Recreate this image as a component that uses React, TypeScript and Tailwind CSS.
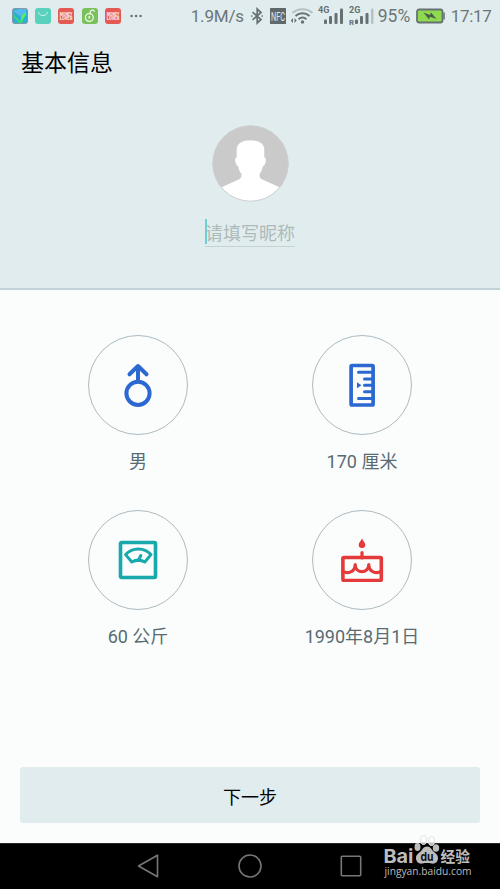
import React from "react";

const StatusBar = () => (
  <div className="flex h-[31px] items-center pl-3 font-[Roboto,sans-serif] text-[#6b7678]">
    {/* Notifications */}
    <div className="flex items-center gap-[7.2px]">
      <svg className="size-4" viewBox="0 0 16 16">
        <rect width="16" height="16" rx="3" fill="#7d9aa5" />
        <rect x="1" y="1" width="14" height="14" rx="2.5" fill="#2eaed3" />
        <path d="M1 3 8 1h6v4l-6 3Z" fill="#55b8ef" />
        <path d="M2 7l6 6 5-8 1 1-4 9H7L2 9Z" fill="#37dc77" />
        <path d="M9 8l5-4v3l-5 6Z" fill="#55ef64" />
      </svg>
      <svg className="size-4" viewBox="0 0 16 16">
        <rect width="16" height="16" rx="3" fill="#59d2bd" />
        <path
          d="M3.500 4.500c1.300 4.200 7.700 4.200 9 0"
          fill="none"
          stroke="#d5f7ef"
          strokeWidth="1"
          strokeLinecap="round"
        />
      </svg>
      <LoverBadge />
      <svg className="size-4" viewBox="0 0 16 16">
        <rect width="16" height="16" rx="3" fill="#79c15a" />
        <g fill="none" stroke="#f0faeb" strokeLinecap="round">
          <circle cx="7.300" cy="9.500" r="3.900" strokeWidth="1.300" />
          <path d="M7.300 9.800V8.500" strokeWidth="1.700" />
          <path d="M8.200 5.600c-.7-3.500 3-4.500 4.200-2.400" strokeWidth="1.200" />
        </g>
      </svg>
      <LoverBadge />
    </div>
    <svg className="ml-[9px] h-1 w-3" viewBox="0 0 12 4" fill="#687476">
      <circle cx="1.600" cy="2" r="1.300" />
      <circle cx="6.100" cy="2" r="1.300" />
      <circle cx="10.600" cy="2" r="1.300" />
    </svg>

    {/* Network */}
    <span className="ml-[49px] w-[60px] pt-0.5 text-[17px] leading-none tracking-[-0.2px] whitespace-nowrap">
      1.9M/s
    </span>
    <svg
      className="h-[18px] w-3"
      viewBox="0 0 12 18"
      fill="none"
      stroke="#667174"
      strokeWidth="1.700"
    >
      <path d="M1.500 5.200 10 12.500 6.200 16V2L10 5.500 1.500 12.800" />
      <path d="M.7 9h.1M11.200 9h.1" strokeLinecap="round" />
    </svg>
    <svg className="ml-[7px] h-4 w-4 overflow-visible" viewBox="0 0 16 16">
      <rect width="16" height="16" rx="0.500" fill="#5f696c" />
      <text
        x="1"
        y="12.700"
        fontSize="13"
        textLength="14"
        lengthAdjust="spacingAndGlyphs"
        fill="#dfe9ea"
        fontFamily="Roboto, sans-serif"
      >
        NFC
      </text>
    </svg>
    <svg className="ml-1 h-[18px] w-6" viewBox="0 0 24 18" fill="none">
      <path d="M2.500 6c5.500-5 14.500-5 20 0" stroke="#b7c1c3" strokeWidth="2" />
      <path d="M5.500 8.900c4-3.500 10-3.500 14 0" stroke="#667174" strokeWidth="2" />
      <path d="M8.600 12.200c2.300-2 5.500-2 7.800 0" stroke="#667174" strokeWidth="2" />
      <circle cx="12.500" cy="15" r="1.700" fill="#667174" />
      <path d="M.8 13.500 3 11v5ZM6.700 13.500 4.500 11v5Z" fill="#667174" />
    </svg>
    <svg className="ml-1 h-[22px] w-[26px] overflow-visible" viewBox="0 0 26 22" fill="#667174">
      <text x="0" y="7.500" fontSize="9" fontWeight="700" fontFamily="Roboto, sans-serif">
        4G
      </text>
      <rect x="6" y="14.500" width="3" height="4.500" rx="1" />
      <rect x="11" y="11" width="3" height="8" rx="1" />
      <rect x="16.500" y="8" width="3" height="11" rx="1" />
      <rect x="22" y="3.500" width="3" height="15.500" rx="1" />
    </svg>
    <svg className="ml-[5px] h-[22px] w-[26px] overflow-visible" viewBox="0 0 26 22" fill="#667174">
      <text x="0" y="7.500" fontSize="9" fontWeight="700" fontFamily="Roboto, sans-serif">
        2G
      </text>
      <text x="0" y="20" fontSize="8" fontWeight="700" fontFamily="Roboto, sans-serif">
        R
      </text>
      <rect x="6" y="14.500" width="3" height="4.500" rx="1" />
      <rect x="11" y="11" width="3" height="8" rx="1" />
      <rect x="16.500" y="8" width="3" height="11" rx="1" />
      <rect x="22" y="3.500" width="2.500" height="15.500" rx="1" fill="#b7c1c3" />
    </svg>
    <span className="ml-[3px] w-[38px] pt-0.5 text-[17.5px] leading-none whitespace-nowrap">
      95%
    </span>
    <svg className="h-4 w-[29px]" viewBox="0 0 29 16">
      <rect x="1" y="1.500" width="25.500" height="13" rx="2" fill="#8ed94f" stroke="#667174" strokeWidth="1.800" />
      <rect x="27.300" y="4.500" width="1.500" height="7" fill="#667174" />
      <path d="m7.500 4.500 6.500 2.500 1-2.500 5.500 6.500-6.500-2.200-1 2.700Z" fill="#4a5e4b" />
    </svg>
    <span className="ml-1.5 pt-0.5 text-[17px] leading-none tracking-[-0.3px] whitespace-nowrap">
      17:17
    </span>
  </div>
);

const LoverBadge = () => (
  <svg className="size-4 overflow-visible" viewBox="0 0 16 16">
    <rect width="16" height="16" rx="3" fill="#e45a52" />
    <g fill="#fbe9e7" fontSize="4.600" fontWeight="900" fontFamily="Roboto, sans-serif">
      <text x="1.800" y="7.800" textLength="12.500" lengthAdjust="spacingAndGlyphs">
        MONEY
      </text>
      <text x="1.800" y="11.500" textLength="12.500" lengthAdjust="spacingAndGlyphs">
        LOVER
      </text>
    </g>
  </svg>
);

const Avatar = () => (
  <svg className="mt-[46px] size-[77px]" viewBox="0 0 77 77">
    <defs>
      <clipPath id="avatar">
        <circle cx="38.500" cy="38.500" r="38" />
      </clipPath>
    </defs>
    <g clipPath="url(#avatar)">
      <rect width="77" height="77" fill="#cacaca" />
      <path
        fill="#fff"
        d="M38.500 15.200C30 15.200 24.700 18.500 24.700 25v7.500c-1.900.3-1.800 2.500-1.300 4.500.5 2.200 1.300 3.700 2.800 4.200.6 3.300 1.600 5.800 3.300 7.800 0 3.200-.3 4.300-3.500 5.800L9 62.500V79h59V62.500l-17-7.700c-3.200-1.500-3.500-2.600-3.500-5.800 1.700-2 2.700-4.500 3.300-7.800 1.500-.5 2.300-2 2.800-4.200.5-2 .6-4.200-1.300-4.500V25c0-6.500-5.300-9.800-13.800-9.800Z"
      />
    </g>
    <circle cx="38.500" cy="38.500" r="37.700" fill="none" stroke="#ccd0d0" />
  </svg>
);

const MaleIcon = () => (
  <svg className="h-11 w-7" viewBox="0 0 28 44" fill="none" stroke="#2c68d2" strokeWidth="4">
    <circle cx="14" cy="30.300" r="11.600" />
    <path d="M14 18V3" />
    <path d="M5.500 11.300 14 3l8.500 8.300" strokeLinecap="round" strokeLinejoin="round" />
  </svg>
);

const RulerIcon = () => (
  <svg className="h-11 w-7" viewBox="0 0 28 44" fill="none" stroke="#2c68d2" strokeWidth="3">
    <rect x="3.100" y="2.500" width="22" height="39.500" rx="1" strokeWidth="3.700" />
    <path d="M10.500 9.200H24M16.500 16H24M16.500 22.300H24M16.500 28.700H24M10.500 35.400H24" strokeLinecap="round" />
    <path d="M9 19.300 13.500 22.300 9 25.300Z" fill="#2c68d2" stroke="none" />
  </svg>
);

const ScaleIcon = () => (
  <svg
    className="size-10"
    viewBox="0 0 40 40"
    fill="none"
    stroke="#17a9ac"
    strokeWidth="3"
    strokeLinejoin="round"
  >
    <rect x="2.500" y="2.500" width="35" height="35" rx="1" strokeWidth="3.600" />
    <path d="M7.600 14.600C14.500 7.200 26 7.200 33 14.600L26.800 22c-4-2.300-9-2.300-13 0Z" />
    <path d="m20.300 20.500 2.500-5" strokeLinecap="round" />
  </svg>
);

const CakeIcon = () => (
  <svg className="h-11 w-11" viewBox="0 0 44 44" fill="none" stroke="#e53a3a" strokeWidth="3.200">
    <path d="M22 0.500c1 2.700 3.300 4 3.300 6.300A3.200 3.200 0 0 1 22 10a3.200 3.200 0 0 1-3.300-3.200C18.700 4.500 21 3.200 22 .5Z" fill="#e53a3a" stroke="none" />
    <path d="M22 14.500V20" strokeLinecap="round" />
    <rect x="2.900" y="19.500" width="38.400" height="23" rx="1" strokeWidth="3.600" />
    <path d="M2.500 33C7.500 36.500 15.200 34 15.200 26.500c0 9.500 13.600 9.500 13.600 0 0 7.500 7.700 10 12.700 6.500" strokeLinejoin="round" strokeLinecap="round" />
  </svg>
);

const InfoItem = ({
  icon: Icon,
  label,
}: {
  icon: React.FC;
  label: string;
}) => (
  <button className="flex flex-col items-center">
    <span className="flex size-[100px] items-center justify-center rounded-full border-[1.5px] border-[#adbac2]">
      <Icon />
    </span>
    <span className="mt-[13px] text-[18px] leading-7 whitespace-nowrap text-[#596b72]">
      {label}
    </span>
  </button>
);

const App: React.FC = () => {
  return (
    <div className="relative flex h-[889px] w-[500px] flex-col overflow-hidden bg-[#fafdfc] font-[Roboto,'Noto_Sans_CJK_SC',sans-serif]">
      {/* Header */}
      <header className="flex h-[290px] flex-col border-b-2 border-[#c2d2d9] bg-[#e1ecee]">
        <StatusBar />
        <h1 className="mt-[17px] -mb-px pl-[21px] text-[23px] leading-8 text-black">
          基本信息
        </h1>
        <div className="flex flex-col items-center">
          <Avatar />
          <div className="mt-[17px] flex h-[28px] w-[90px] items-start border-b border-[#c5d2d3]">
            <span className="h-[25px] w-[2px] shrink-0 bg-[#6fd0d4]" />
            <span className="-ml-[2px] text-[18px] leading-[29px] whitespace-nowrap text-[#adbaba]">
              请填写昵称
            </span>
          </div>
        </div>
      </header>

      {/* Profile fields */}
      <main className="grid grid-cols-2 gap-y-[34px] px-[26px] pt-[45px]">
        <InfoItem icon={MaleIcon} label="男" />
        <InfoItem icon={RulerIcon} label="170 厘米" />
        <InfoItem icon={ScaleIcon} label="60 公斤" />
        <InfoItem icon={CakeIcon} label="1990年8月1日" />
      </main>

      <div className="mt-auto px-5 pb-5">
        <button className="h-14 w-full rounded-[3px] bg-[#e1ecee] pt-1 text-[18px] text-black">
          下一步
        </button>
      </div>

      {/* System navigation */}
      <nav className="flex h-[46px] items-center border-t border-[#282828] bg-black pb-px pl-[137px]">
        <svg className="h-6 w-[22px]" viewBox="0 0 22 24" fill="none" stroke="#777" strokeWidth="1.600" strokeLinejoin="round">
          <path d="M20.500 1.200v21.600L1.500 12Z" />
        </svg>
        <svg className="ml-[79px] size-6" viewBox="0 0 24 24" fill="none" stroke="#777" strokeWidth="1.600">
          <circle cx="12" cy="12" r="11" />
        </svg>
        <svg className="ml-[78px] size-[22px]" viewBox="0 0 22 22" fill="none" stroke="#777" strokeWidth="1.600">
          <rect x="1.300" y="1.300" width="19.400" height="19.400" rx="1" />
        </svg>
      </nav>

      {/* Watermark */}
      <svg className="absolute top-[833px] left-[382px] h-12 w-24" viewBox="0 0 96 48">
        <g fill="#bdbdbd">
          <text x="1.500" y="29.500" fontSize="19" fontWeight="700" textLength="30" lengthAdjust="spacingAndGlyphs" fontFamily="Inter, sans-serif">
            Bai
          </text>
          <ellipse cx="35.500" cy="14" rx="3" ry="4" />
          <ellipse cx="54" cy="15" rx="3.200" ry="3.800" />
          <path d="M45 13.500c3.500 0 4.500 3 6.500 5s4.500 3 4.500 6.500c0 4-3 6.200-6.500 5.500-3-.6-6-.6-9 0-3.500.7-6.500-1.500-6.500-5.500 0-3.500 2.500-4.500 4.500-6.500s3-5 6.500-5Z" />
          <text x="58.500" y="28.500" fontSize="15" fontWeight="700" textLength="29.500" lengthAdjust="spacingAndGlyphs" fontFamily="'Noto Sans CJK SC', sans-serif">
            经验
          </text>
          <text x="2.500" y="42" fontSize="10" textLength="87" lengthAdjust="spacingAndGlyphs" fontFamily="'Open Sans', sans-serif">
            jingyan.baidu.com
          </text>
        </g>
        <g stroke="#e2e4e4" fill="#fafdfc">
          <ellipse cx="41.500" cy="7" rx="3" ry="4.500" />
          <ellipse cx="49.500" cy="8" rx="3" ry="4.500" />
        </g>
        <path d="M39 9.500c1 2.600 4 2.600 5 0ZM47 9.500c1 3.500 4 3.500 5 0Z" fill="#bdbdbd" />
        <text x="38.500" y="28" fontSize="12" fontWeight="700" fill="#101010" textLength="13" lengthAdjust="spacingAndGlyphs" fontFamily="Inter, sans-serif">
          du
        </text>
      </svg>
    </div>
  );
};

export default App;
